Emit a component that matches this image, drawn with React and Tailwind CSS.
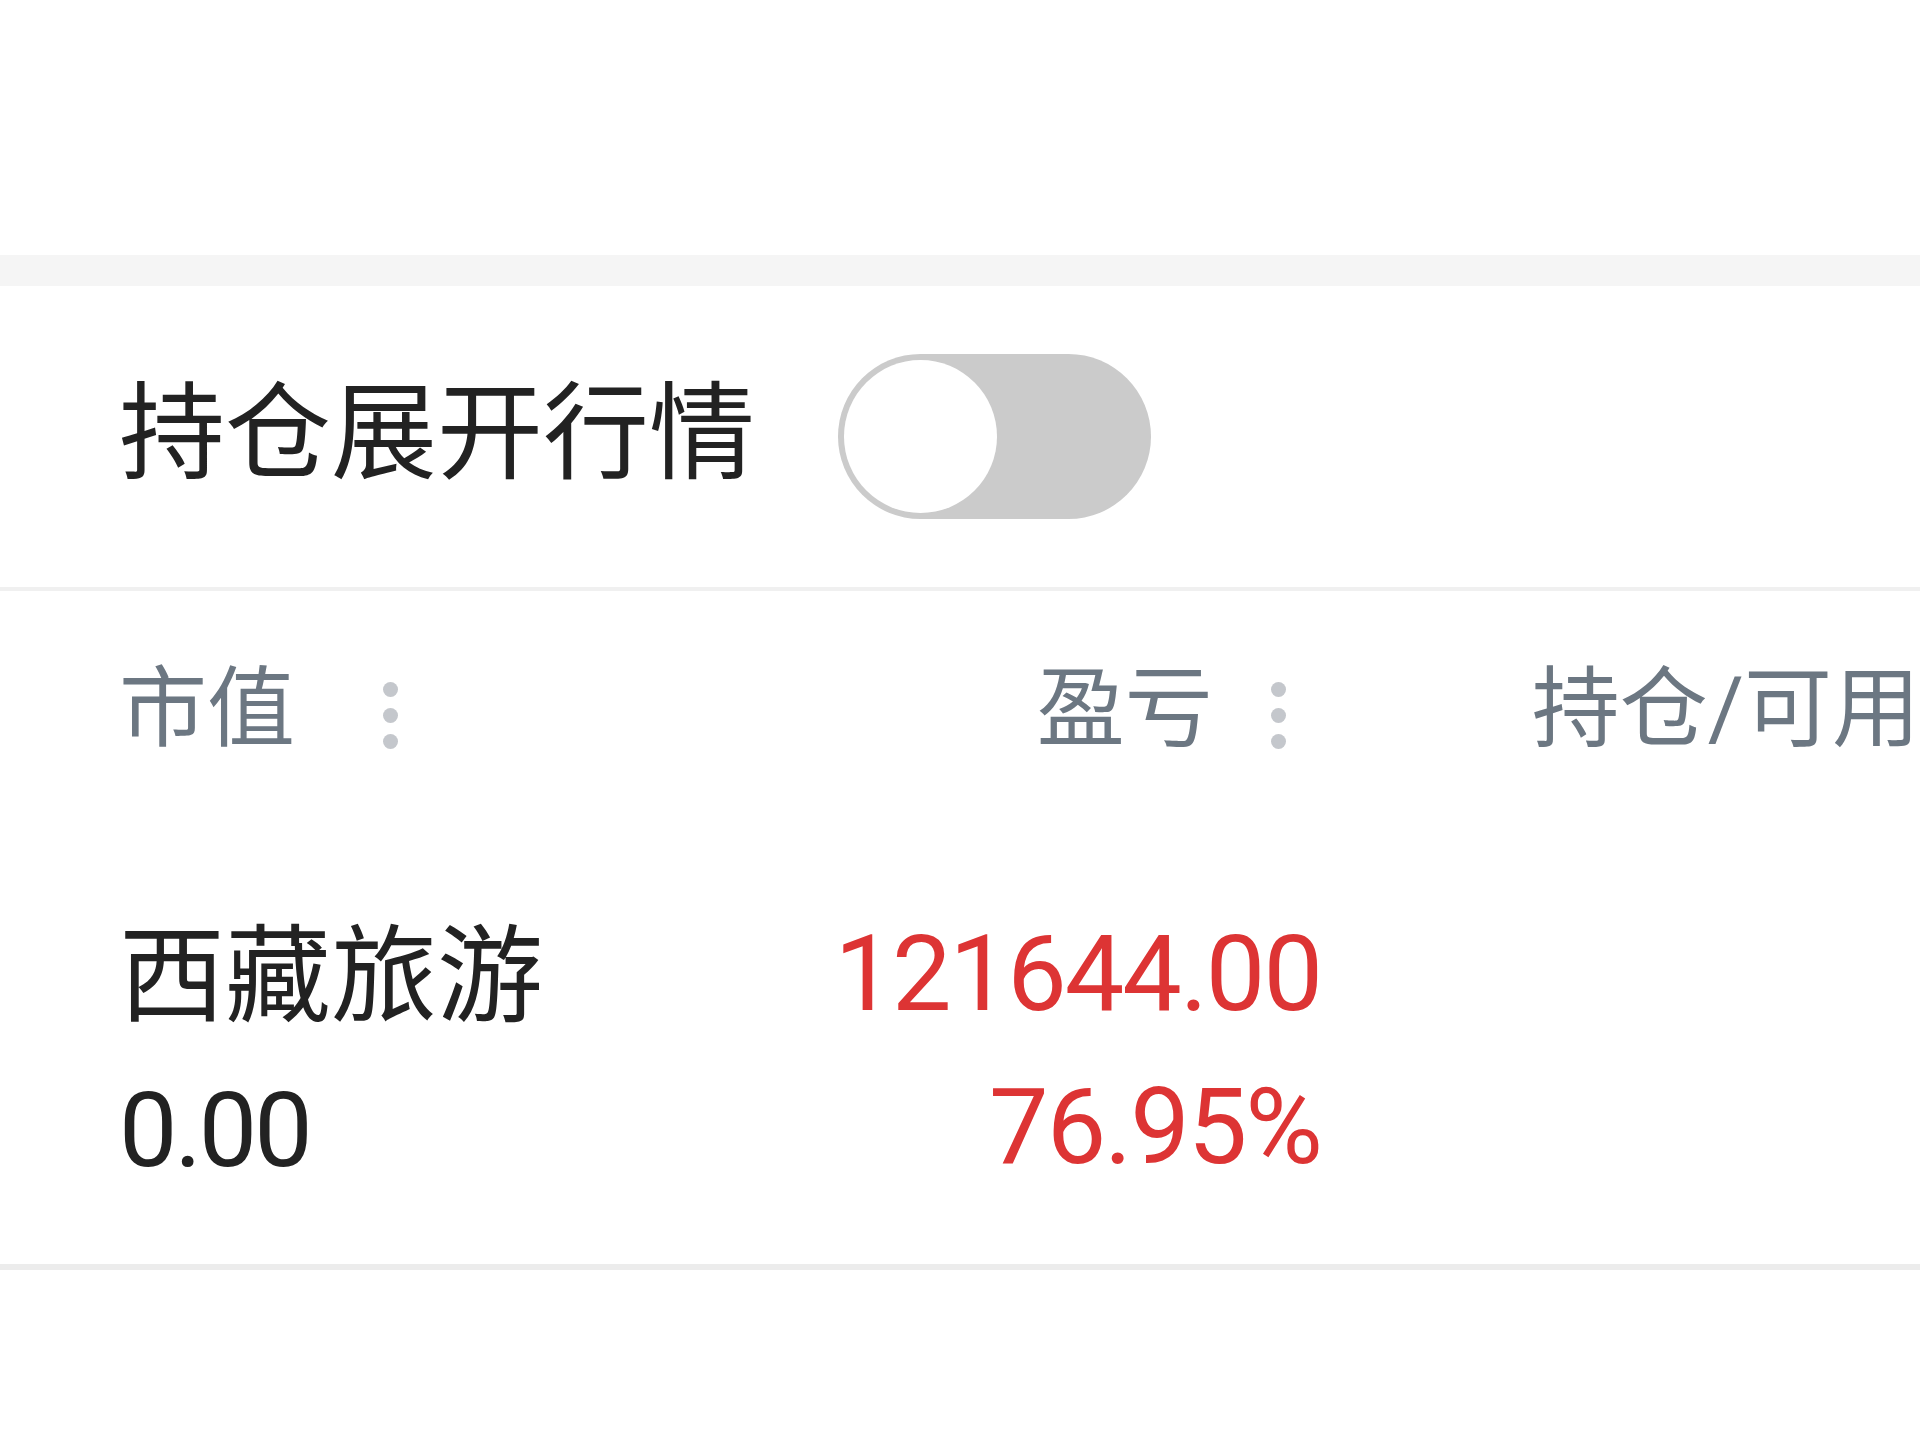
import React, { useState } from "react";

const cjk = { fontFamily: 'Roboto, "Noto Sans CJK SC", sans-serif' };

// three stacked dots next to a column title
const SortDots = ({ className = "" }) => (
  <div className={`flex flex-col items-center gap-[11px] ${className}`}>
    <span className="w-[15px] h-[15px] rounded-full bg-[#c4c7cc]"></span>
    <span className="w-[15px] h-[15px] rounded-full bg-[#c4c7cc]"></span>
    <span className="w-[15px] h-[15px] rounded-full bg-[#c4c7cc]"></span>
  </div>
);

const Toggle = ({ on, onChange }) => (
  <button
    onClick={() => onChange(!on)}
    className={`w-[313px] h-[165px] rounded-full p-[6px] flex items-center ${
      on ? "bg-[#e03a3a] justify-end" : "bg-[#cbcbcb] justify-start"
    }`}
  >
    <span className="w-[153px] h-[153px] rounded-full bg-white block"></span>
  </button>
);

export default function App() {
  const [expand, setExpand] = useState(false);

  return (
    <div className="w-[1920px] h-[1440px] bg-white overflow-hidden" style={cjk}>
      {/* empty top area */}
      <div className="h-[255px] bg-white"></div>
      <div className="h-[31px] bg-[#f5f5f5]"></div>

      {/* expand toggle row */}
      <div className="h-[301px] flex items-center pl-[119px]">
        <span className="text-[106px] leading-none text-[#222222] mr-[83px] -mt-[6px]">
          持仓展开行情
        </span>
        <Toggle on={expand} onChange={setExpand} />
      </div>
      <div className="h-[4px] bg-[#f0f0f0]"></div>

      {/* column header */}
      <div className="flex items-start pl-[119px] pt-[74px] h-[236px] text-[88px] leading-none text-[#6c7782] whitespace-nowrap">
        <div className="w-[700px] flex items-center">
          <span>市值</span>
          <SortDots className="ml-[88px] mt-[12px]" />
        </div>
        <div className="w-[470px] flex items-center justify-end">
          <span>盈亏</span>
          <SortDots className="ml-[58px] mt-[12px]" />
        </div>
        <div className="ml-[246px]">持仓/可用</div>
      </div>

      {/* holding row */}
      <div className="flex pl-[119px] h-[437px] pt-[97px] text-[#222222]">
        <div className="w-[700px] flex flex-col">
          <span className="text-[106px] leading-none">西藏旅游</span>
          <span className="text-[104px] leading-none tracking-[-3px] mt-[49px]">
            0.00
          </span>
        </div>
        <div className="w-[502px] flex flex-col items-end text-[#dd3434]">
          <span className="text-[106px] leading-none tracking-[-2px] mt-[-3px]">121644.00</span>
          <span className="text-[106px] leading-none tracking-[-2px] mt-[47px]">76.95%</span>
        </div>
      </div>
      <div className="h-[6px] bg-[#ececec]"></div>
    </div>
  );
}
